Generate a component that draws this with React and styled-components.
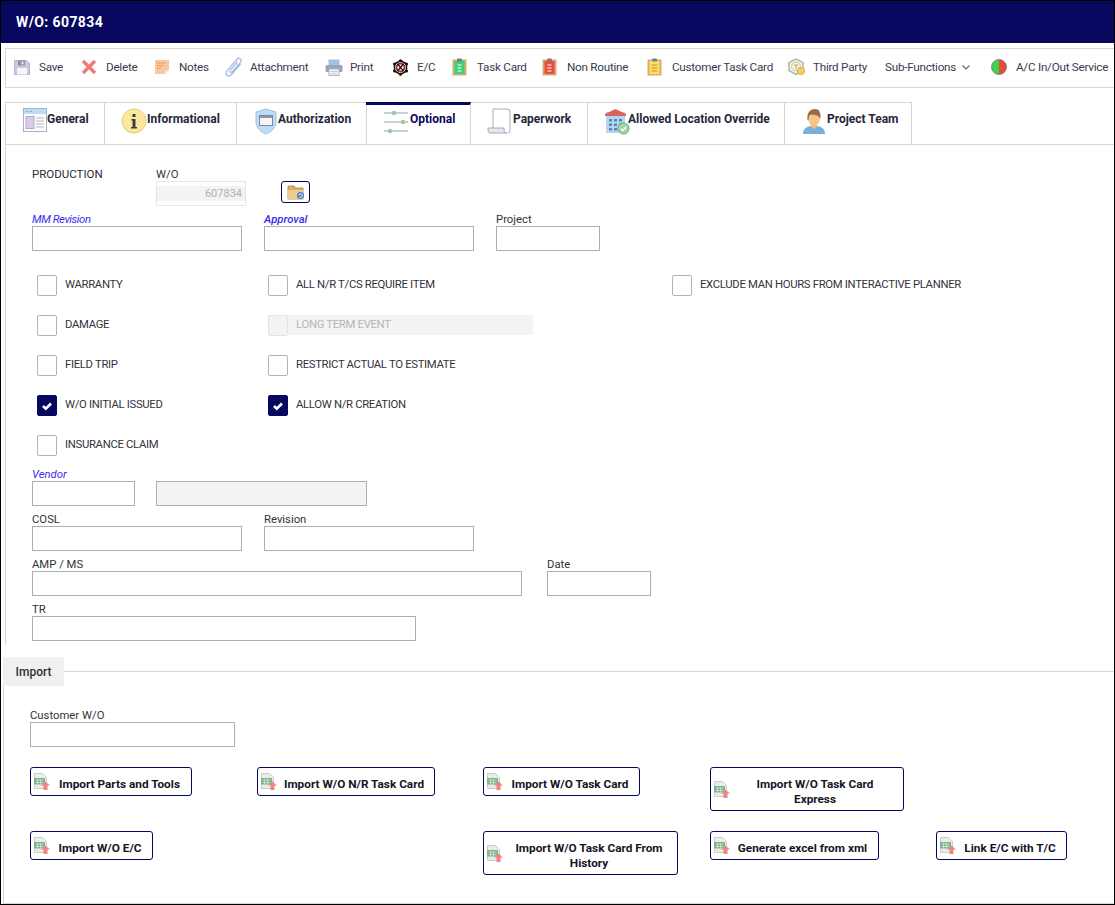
import React from "react";
import styled, { createGlobalStyle } from "styled-components";

const Global = createGlobalStyle`
  html, body { margin: 0; padding: 0; background: #fff; }
  body { font-family: Roboto, "Noto Sans", sans-serif; font-size: 12px; color: #333; }
  * { box-sizing: border-box; }
`;

const NAVY = "#07075f";
const LINE = "#d6d6d6";

const Frame = styled.div`
  width: 1115px; height: 905px; border: 1px solid #000; display: flex; flex-direction: column; overflow: hidden; background: #fff;
`;
const Header = styled.header`
  height: 42px; flex: none; background: ${NAVY}; color: #fff; font-weight: 700; font-size: 14px; display: flex; align-items: center; padding-left: 15px; letter-spacing: .4px;
`;
const Toolbar = styled.nav`
  flex: none; height: 40px; margin: 5px 0 0 4px; border: 1px solid ${LINE}; border-right: 0; display: flex; align-items: center; padding: 0 0 2px 3px; white-space: nowrap;
`;
const ToolItem = styled.div`
  flex: none; width: ${p => p.$w}px; padding-left: 5px; display: flex; align-items: center; color: #3a3a4e; font-size: 11.7px; letter-spacing: -.25px;
`;
const ToolIcon = styled.span`
  flex: none; width: 25px; height: 18px; display: flex; align-items: center;
`;
const Chevron = styled.svg`
  width: 10px; height: 7px; margin-left: 5px;
`;
const Tabs = styled.div`
  flex: none; height: 43px; margin: 14px 0 0 4px; display: flex; border-bottom: 1px solid ${LINE};
`;
const Tab = styled.div`
  flex: none; width: ${p => p.$w + (p.$active ? 1 : 0)}px; margin: 0 0 -1px ${p => (p.$active ? -1 : 0)}px; border: 1px solid ${LINE}; border-left-width: ${p => (p.$first ? 1 : 0)}px;
  border-top: ${p => (p.$active ? `3px solid ${NAVY}` : `1px solid ${LINE}`)};
  padding: ${p => (p.$active ? 3 : 5)}px 0 0 ${p => p.$pl}px; display: flex; align-items: flex-start; font-weight: 700; font-size: 12px;
  color: ${p => (p.$active ? NAVY : "#27273a")}; white-space: nowrap;
`;
const TabText = styled.span`
  margin-top: 4px; line-height: 14px;
`;
const Panel = styled.section`
  flex: none; height: 500px; margin-left: 4px; border-left: 1px solid ${LINE}; padding: 23px 0 0 26px;
`;
const Row = styled.div`
  display: flex; gap: ${p => p.$gap ?? 22}px; margin-top: ${p => p.$mt ?? 7}px;
`;
const Field = styled.div`
  flex: none; width: ${p => p.$w}px;
`;
const Label = styled.label`
  display: block; height: 13px; line-height: 14px; font-size: 11.3px; white-space: nowrap; color: #333;
`;
const LinkLabel = styled(Label)`
  color: #3a2cf0; font-style: italic; font-weight: ${p => (p.$strong ? 500 : 400)}; letter-spacing: ${p => (p.$tight ? -0.4 : 0)}px;
`;
const Input = styled.input`
  display: block; width: 100%; height: 25px; border: 1px solid #adadb2; background: ${p => (p.$grey ? "#f3f3f3" : "#fff")}; outline: 0; padding: 0 4px; margin: 0; border-radius: 0;
`;
const Production = styled.div`
  width: 124px; flex: none; height: 13px; line-height: 12px; font-size: 11.5px; color: #2a2a33;
`;
const ReadOnlyBox = styled.div`
  height: 25px; border: 1px solid #e6e6e6; padding: 4px 0;
`;
const ReadOnlyValue = styled.div`
  height: 15px; background: #f3f3f3; color: #b0b0b0; font-size: 11px; line-height: 15px; text-align: right; padding-right: 3px;
`;
const FolderButton = styled.button`
  flex: none; width: 29px; height: 22px; margin: 13px 0 0 35px; border: 1px solid ${NAVY}; border-radius: 3px; background: #fff; padding: 0; display: flex; align-items: center; justify-content: center;
`;
const CheckGrid = styled.div`
  display: grid; grid-template-columns: 231px 404px 400px; grid-auto-rows: 20px; row-gap: 20px; margin: 24px 0 0 5px;
`;
const CheckItem = styled.div`
  display: flex; align-items: center; gap: 8px; height: 20px; font-size: 11.3px; white-space: nowrap; letter-spacing: -.31px;
  color: ${p => (p.$disabled ? "#b5b5b5" : "#33333c")};
  background: ${p => (p.$disabled ? "#f3f3f3" : "transparent")};
  width: ${p => (p.$disabled ? "265px" : "auto")};
`;
const CheckText = styled.span`
  margin-top: -2px;
`;
const Box = styled.span`
  flex: none; width: 20px; height: 21px; border: 1px solid ${p => (p.$on ? NAVY : p.$disabled ? "#e3e3e3" : "#b4b4b4")}; border-radius: 2px;
  background: ${p => (p.$on ? NAVY : p.$disabled ? "#f3f3f3" : "#fff")}; display: flex; align-items: center; justify-content: center; margin-top: 1px;
`;
const Spacer = styled.div``;
const ImportHead = styled.div`
  flex: none; margin: 12px 0 0 2px; height: 29px; display: flex; align-items: center;
`;
const ImportTab = styled.div`
  flex: none; width: 61px; height: 29px; background: #f0f0f0; font-weight: 500; font-size: 12px; color: #30303a; display: flex; align-items: center; justify-content: center;
`;
const HeadLine = styled.div`
  flex: 1; height: 1px; background: ${LINE};
`;
const ImportBody = styled.section`
  flex: 1; margin-left: 2px; border-left: 1px solid ${LINE}; border-bottom: 1px solid ${LINE}; padding: 23px 0 0 26px;
`;
const ButtonGrid = styled.div`
  display: grid; grid-template-columns: repeat(5, 226.5px); row-gap: 20px; margin-top: 20px; align-items: start;
`;
const ActionButton = styled.button`
  width: ${p => p.$w}px; height: ${p => (p.$two ? 44 : 29)}px; border: 1px solid ${NAVY}; border-radius: 3px; background: #fff; padding: 0 3px 0 3px; display: flex; align-items: center;
  font: 700 11.8px/15px Roboto, "Noto Sans", sans-serif; color: #15151f;
`;
const ButtonText = styled.span`
  flex: 1; text-align: center; padding: 6px 0 0 1px;
`;

/* ---------- drawn icons ---------- */
const Save = () => (
  <svg width="16" height="17" viewBox="0 0 16 17">
    <path d="M.5 1.500h12l3 3v11H.5z" fill="#cfc6e4" stroke="#b9b0d4" />
    <rect x="4" y="1.500" width="7" height="5" fill="#8f8fa3" />
    <rect x="7.500" y="2.500" width="2" height="3" fill="#e8e8ee" />
    <rect x="3" y="9" width="10" height="6.500" fill="#f5f5fa" />
  </svg>
);
const Del = () => (
  <svg width="16" height="16" viewBox="0 0 16 16">
    <path d="M2 2l12 12M14 2L2 14" stroke="#ee7a78" strokeWidth="3.200" />
  </svg>
);
const Notes = () => (
  <svg width="16" height="16" viewBox="0 0 16 16">
    <path d="M1 1h14v10l-4 4H1z" fill="#fbc79c" />
    <path d="M11 15v-4h4z" fill="#f6e5d6" />
    <path d="M3 4h9M3 6.500h7M3 9h4" stroke="#e89d68" strokeWidth="1.100" />
  </svg>
);
const Clip = () => (
  <svg width="18" height="20" viewBox="0 0 18 20" fill="none">
    <path d="M15.500 7L6.500 17.500c-1.400 1.500-3.300 1.800-4.500.8s-1.100-3 .2-4.600L11.800 2.500c1.100-1.200 2.700-1.500 3.700-.6s.9 2.500-.2 3.700L7.500 14.500c-.8.900-1.700 1.100-2.300.6s-.4-1.500.3-2.300L12.500 5" stroke="#a3b9de" strokeWidth="1.200" />
  </svg>
);
const Printer = () => (
  <svg width="18" height="17" viewBox="0 0 18 17">
    <rect x="4" y="1" width="10" height="6" fill="#9fc0ee" stroke="#b4bccb" />
    <rect x="0.500" y="6" width="17" height="7" rx="1.500" fill="#9aa5b8" />
    <rect x="4" y="10" width="10" height="6.500" fill="#f4f5f8" stroke="#aeb5c2" />
    <path d="M6 12.500h6M6 14.500h6" stroke="#c3c8d2" />
  </svg>
);
const Atom = () => (
  <svg width="17" height="17" viewBox="0 0 17 17" fill="none">
    <path d="M8.500 1.500l6 3.500v7l-6 3.500-6-3.500V5z" stroke="#111" strokeWidth="1.500" />
    <circle cx="8.500" cy="8.500" r="4" stroke="#b3262a" strokeWidth="1.800" />
    <path d="M5.500 5l6 7M11.500 5l-6 7" stroke="#111" strokeWidth="1.200" />
    <circle cx="8.500" cy="1.800" r="1.500" fill="#111" /><circle cx="8.500" cy="15.200" r="1.500" fill="#111" />
    <circle cx="2.500" cy="5" r="1.500" fill="#111" /><circle cx="14.500" cy="5" r="1.500" fill="#111" />
    <circle cx="2.500" cy="12" r="1.500" fill="#111" /><circle cx="14.500" cy="12" r="1.500" fill="#111" />
  </svg>
);
const Board = ({ fill, line = "#fff", wide }) => (
  <svg width="15" height="18" viewBox="0 0 15 18">
    <rect x="0.500" y="1.500" width="14" height="16" fill="#d9ab72" />
    <rect x="2.500" y="3" width="10" height="13" fill={fill} />
    <rect x="5" y="0.500" width="5" height="3" rx="1" fill="#6e7f8d" />
    <path d={wide ? "M4.500 7h6M4.500 10h6M4.500 13h6" : "M5.500 7h4M5.500 10h4M5.500 13h4"} stroke={line} strokeWidth="1.100" />
  </svg>
);
const ThirdParty = () => (
  <svg width="18" height="18" viewBox="0 0 18 18" fill="none">
    <path d="M8 1l7 3.600v8L8 16.400 1 12.600v-8z" fill="#f3f1e0" stroke="#a9adb0" strokeWidth="1.400" />
    <circle cx="8" cy="8.500" r="4.400" stroke="#cfc796" />
    <path d="M6 7h4M8 7v4" stroke="#b8ad6a" />
    <circle cx="13" cy="13" r="3.600" fill="#f2cf5e" stroke="#d8b23e" />
  </svg>
);
const InOut = () => (
  <svg width="16" height="16" viewBox="0 0 16 16">
    <path d="M8 .5a7.500 7.500 0 0 0 0 15z" fill="#3fd250" />
    <path d="M8 .5a7.500 7.500 0 0 1 0 15z" fill="#ea4a3c" />
    <circle cx="8" cy="8" r="7.500" fill="none" stroke="#6b6b6b" strokeWidth=".7" />
  </svg>
);
const General = () => (
  <svg width="24" height="24" viewBox="0 0 24 24">
    <rect x="0.500" y="0.500" width="23" height="23" fill="#fbfcff" stroke="#a8b2bf" />
    <rect x="1" y="1" width="22" height="5" fill="#bcdcf7" />
    <path d="M3 3.500h1M5.500 3.500h1M8 3.500h1" stroke="#7f98ad" />
    <rect x="3" y="8.500" width="8" height="12" fill="#d6cdec" stroke="#b3a8cd" />
    <path d="M13 10h8M13 13h8M13 16h8M13 19h8" stroke="#b3b9c2" />
  </svg>
);
const Info = () => (
  <svg width="26" height="26" viewBox="0 0 26 26">
    <circle cx="13" cy="13" r="12" fill="#fbe79d" stroke="#e2cd80" />
    <rect x="11.500" y="6" width="3" height="3" fill="#3c3c3c" />
    <path d="M10.500 11h4v8h1.500v1.500h-6V19h1.500v-6.500h-1z" fill="#3c3c3c" />
  </svg>
);
const Shield = () => (
  <svg width="23" height="27" viewBox="0 0 23 27">
    <path d="M11 1l10 3v10c0 6-5 10-10 12C6 24 1 20 1 14V4z" fill="#bcdcf7" stroke="#9fc3e2" />
    <rect x="4.500" y="7.500" width="13" height="10" fill="#f3f5f8" stroke="#7d8893" />
    <rect x="5" y="8" width="12" height="2" fill="#8e98a2" />
  </svg>
);
const Sliders = () => (
  <svg width="27" height="26" viewBox="0 0 27 26" fill="none">
    <path d="M1 5h24M1 14h24M1 23h24" stroke="#9a9fa8" />
    <circle cx="11" cy="5" r="2.200" fill="#9ccb9b" /><circle cx="20" cy="14" r="2.200" fill="#9ccb9b" /><circle cx="7" cy="23" r="2.200" fill="#9ccb9b" />
  </svg>
);
const Paper = () => (
  <svg width="26" height="26" viewBox="0 0 26 26" fill="none">
    <path d="M6 20V1h14q3 0 3 3v19q0 2-2 2" fill="#fff" stroke="#a2adb8" />
    <path d="M1 20h16v3q0 2 3 2H3q-2 0-2-3z" fill="#e3e9ef" stroke="#a2adb8" />
  </svg>
);
const Building = () => (
  <svg width="23" height="27" viewBox="0 0 23 27" overflow="visible">
    <rect x="1" y="4" width="19" height="21" fill="#b5d6f3" />
    <path d="M0 6l10.500-5L21 6v2H0z" fill="#d9635f" />
    <path d="M4 11h3v2.500H4zM9 11h3v2.500H9zM14 11h3v2.500h-3zM4 15.500h3V18H4zM9 15.500h3V18H9zM14 15.500h3V18h-3zM4 20h3v2.500H4zM9 20h3v2.500H9z" fill="#5d84ad" />
    <circle cx="18.500" cy="20.500" r="5.500" fill="#9fd6ae" stroke="#65a97b" />
    <path d="M16 20.500l2 2 3-3.500" fill="none" stroke="#fff" strokeWidth="1.300" />
  </svg>
);
const Person = () => (
  <svg width="24" height="27" viewBox="0 0 24 27">
    <path d="M0 26c0-5 3-7 7-8h8c4 1 7 3 7 8z" fill="#7aaedd" />
    <path d="M8 15h6v4l-3 2-3-2z" fill="#f0bd7c" />
    <ellipse cx="11" cy="10.500" rx="6" ry="7.500" fill="#f4c687" />
    <path d="M4.500 12C3.500 4 8 1 12 1s6 3 5.500 10l-1-1.500C15 7 11 7 8 6.500 6 7 5.500 9.500 5.500 12z" fill="#9b6a45" />
  </svg>
);
const Folder = () => (
  <svg width="18" height="16" viewBox="0 0 18 16">
    <path d="M1 2h6l1.500 2H16v11H1z" fill="#d9b06c" stroke="#a98345" strokeWidth=".8" />
    <path d="M1 6h15v9H1z" fill="#eccb8b" />
    <circle cx="13.500" cy="11.500" r="3.500" fill="#4f7cc4" />
    <path d="M11.800 11.500a1.800 1.800 0 1 1 .6 1.400" fill="none" stroke="#fff" strokeWidth=".9" />
  </svg>
);
const CsvUp = () => (
  <svg width="16" height="17" viewBox="0 0 16 17" style={{ flex: "none" }}>
    <path d="M.5.500h8l4 4v11H.500z" fill="#e9ece9" stroke="#c9cdc9" />
    <rect x="0" y="5" width="11" height="6.500" fill="#7fb48d" />
    <path d="M2 7h7M2 9.500h7M3.500 6v5M6.500 6v5" stroke="#d8ebdc" strokeWidth=".7" />
    <path d="M11.500 8.500L16 12.500h-2.500V17h-4v-4.500H7z" fill="#ef8585" />
  </svg>
);
const Tick = () => (
  <svg width="12" height="10" viewBox="0 0 12 10"><path d="M2 5l2.800 2.600L10 2.500" fill="none" stroke="#fff" strokeWidth="2.600" /></svg>
);

const tools = [
  { w: 67, t: "Save", i: <Save /> },
  { w: 73, t: "Delete", i: <Del /> },
  { w: 71, t: "Notes", i: <Notes /> },
  { w: 100, t: "Attachment", i: <Clip /> },
  { w: 67, t: "Print", i: <Printer /> },
  { w: 60, t: "E/C", i: <Atom /> },
  { w: 90, t: "Task Card", i: <Board fill="#3fcf74" /> },
  { w: 105, t: "Non Routine", i: <Board fill="#ea4d3e" /> },
  { w: 141, t: "Customer Task Card", i: <Board fill="#f8e35c" line="#d98a3a" wide /> },
  { w: 97, t: "Third Party", i: <ThirdParty /> },
];

const tabs = [
  { w: 100, pl: 17, t: "General", i: <General />, first: true },
  { w: 132, pl: 16, t: "Informational", i: <Info /> },
  { w: 130, pl: 18, t: "Authorization", i: <Shield /> },
  { w: 104, pl: 17, t: "Optional", i: <Sliders />, active: true },
  { w: 117, pl: 16, t: "Paperwork", i: <Paper /> },
  { w: 197, pl: 17, t: "Allowed Location Override", i: <Building /> },
  { w: 127, pl: 18, t: "Project Team", i: <Person /> },
];

const Check = ({ label, on, disabled }) => (
  <CheckItem $disabled={disabled}>
    <Box $on={on} $disabled={disabled}>{on && <Tick />}</Box>
    <CheckText>{label}</CheckText>
  </CheckItem>
);

const checks = [
  ["WARRANTY"], ["ALL N/R T/CS REQUIRE ITEM"], ["EXCLUDE MAN HOURS FROM INTERACTIVE PLANNER"],
  ["DAMAGE"], ["LONG TERM EVENT", false, true], null,
  ["FIELD TRIP"], ["RESTRICT ACTUAL TO ESTIMATE"], null,
  ["W/O INITIAL ISSUED", true], ["ALLOW N/R CREATION", true], null,
  ["INSURANCE CLAIM"],
];

const buttons = [
  { w: 162, t: "Import Parts and Tools" },
  { w: 178, t: "Import W/O N/R Task Card" },
  { w: 157, t: "Import W/O Task Card" },
  { w: 194, t: <>Import W/O Task Card<br />Express</>, two: true },
  null,
  { w: 123, t: "Import W/O E/C" },
  null,
  { w: 195, t: "Import W/O Task Card From History", two: true },
  { w: 169, t: "Generate excel from xml" },
  { w: 131, t: "Link E/C with T/C" },
];

export default function App() {
  return (
    <Frame>
      <Global />
      <Header>W/O: 607834</Header>
      <Toolbar>
        {tools.map(x => (
          <ToolItem key={x.t} $w={x.w}><ToolIcon>{x.i}</ToolIcon>{x.t}</ToolItem>
        ))}
        <ToolItem $w={106}>
          Sub-Functions
          <Chevron viewBox="0 0 10 7"><path d="M1.500 1.500L5 5l3.500-3.500" fill="none" stroke="#666" strokeWidth="1.100" /></Chevron>
        </ToolItem>
        <ToolItem $w={125}><ToolIcon><InOut /></ToolIcon>A/C In/Out Service</ToolItem>
      </Toolbar>
      <Tabs>
        {tabs.map(x => (
          <Tab key={x.t} $w={x.w} $pl={x.pl} $first={x.first} $active={x.active}>
            {x.i}<TabText>{x.t}</TabText>
          </Tab>
        ))}
      </Tabs>
      <Panel>
        <Row $gap={0} $mt={0}>
          <Production>PRODUCTION</Production>
          <Field $w={90}>
            <Label>W/O</Label>
            <ReadOnlyBox><ReadOnlyValue>607834</ReadOnlyValue></ReadOnlyBox>
          </Field>
          <FolderButton><Folder /></FolderButton>
        </Row>
        <Row>
          <Field $w={210}><LinkLabel $tight>MM Revision</LinkLabel><Input /></Field>
          <Field $w={210}><LinkLabel $strong>Approval</LinkLabel><Input /></Field>
          <Field $w={104}><Label>Project</Label><Input /></Field>
        </Row>
        <CheckGrid>
          {checks.map((c, i) => c ? <Check key={i} label={c[0]} on={c[1]} disabled={c[2]} /> : <Spacer key={i} />)}
        </CheckGrid>
        <Row $mt={13} $gap={21}>
          <Field $w={103}><LinkLabel>Vendor</LinkLabel><Input /></Field>
          <Field $w={211}><Label>&nbsp;</Label><Input $grey disabled /></Field>
        </Row>
        <Row>
          <Field $w={210}><Label>COSL</Label><Input /></Field>
          <Field $w={210}><Label>Revision</Label><Input /></Field>
        </Row>
        <Row $gap={25}>
          <Field $w={490}><Label>AMP / MS</Label><Input /></Field>
          <Field $w={104}><Label>Date</Label><Input /></Field>
        </Row>
        <Row>
          <Field $w={384}><Label>TR</Label><Input /></Field>
        </Row>
      </Panel>
      <ImportHead>
        <ImportTab>Import</ImportTab>
        <HeadLine />
      </ImportHead>
      <ImportBody>
        <Field $w={205}><Label>Customer W/O</Label><Input /></Field>
        <ButtonGrid>
          {buttons.map((b, i) => b ? (
            <ActionButton key={i} $w={b.w} $two={b.two}><CsvUp /><ButtonText>{b.t}</ButtonText></ActionButton>
          ) : <Spacer key={i} />)}
        </ButtonGrid>
      </ImportBody>
    </Frame>
  );
}
